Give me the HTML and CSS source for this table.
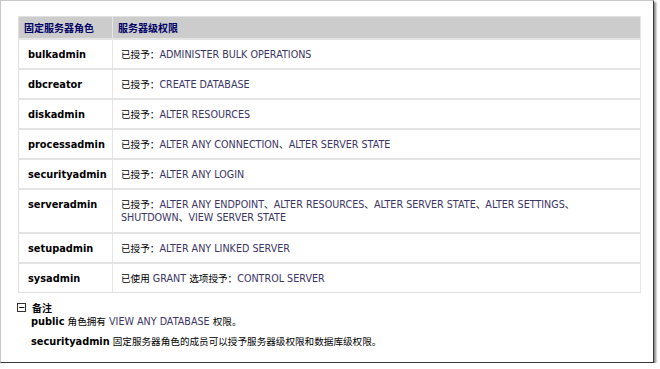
FILE: index.html
```html
<!DOCTYPE html>
<html>

<head>
  <title>固定服务器角色</title>
  <link rel="stylesheet" href="styles.css">
</head>

<body>
  <div class="frame">
    <table class="roles">
      <thead>
        <tr>
          <th class="col-role">固定服务器角色</th>
          <th>服务器级权限</th>
        </tr>
      </thead>
      <tbody>
        <tr>
          <td class="role">bulkadmin</td>
          <td>已授予：<span class="code">ADMINISTER BULK OPERATIONS</span></td>
        </tr>
        <tr>
          <td class="role">dbcreator</td>
          <td>已授予：<span class="code">CREATE DATABASE</span></td>
        </tr>
        <tr>
          <td class="role">diskadmin</td>
          <td>已授予：<span class="code">ALTER RESOURCES</span></td>
        </tr>
        <tr>
          <td class="role">processadmin</td>
          <td>已授予：<span class="code">ALTER ANY CONNECTION</span>、<span class="code">ALTER SERVER STATE</span></td>
        </tr>
        <tr>
          <td class="role">securityadmin</td>
          <td>已授予：<span class="code">ALTER ANY LOGIN</span></td>
        </tr>
        <tr class="tall">
          <td class="role">serveradmin</td>
          <td>已授予：<span class="code">ALTER ANY ENDPOINT</span>、<span class="code">ALTER RESOURCES</span>、<span class="code">ALTER SERVER STATE</span>、<span class="code">ALTER SETTINGS</span>、<br><span class="code">SHUTDOWN</span>、<span class="code">VIEW SERVER STATE</span></td>
        </tr>
        <tr>
          <td class="role">setupadmin</td>
          <td>已授予：<span class="code">ALTER ANY LINKED SERVER</span></td>
        </tr>
        <tr>
          <td class="role">sysadmin</td>
          <td>已使用 <span class="code">GRANT</span> 选项授予：<span class="code">CONTROL SERVER</span></td>
        </tr>
      </tbody>
    </table>

    <div class="notes">
      <div class="notes-title">
        <span class="toggle">−</span>
        <span>备注</span>
      </div>
      <p><b>public</b> 角色拥有 <span class="code">VIEW ANY DATABASE</span> 权限。</p>
      <p><b>securityadmin</b> 固定服务器角色的成员可以授予服务器级权限和数据库级权限。</p>
    </div>
  </div>
</body>

</html>
```

FILE: styles.css
```css
body {
  margin: 0;
  background: #ffffff;
  font-family: "DejaVu Sans", Verdana, "Noto Sans CJK SC", sans-serif;
  color: #000000;
}

/* Outer window with drop shadow */
.frame {
  width: 654px;
  height: 363px;
  border-left: 1px solid #c8c8c8;
  border-top: 1px solid #c8c8c8;
  border-right: 1px solid #3a3a3a;
  border-bottom: 1px solid #3a3a3a;
  box-shadow: 2px 2px 2px #8a8a8a;
  padding: 15px 0 0 17px;
  box-sizing: border-box;
}

/* Roles table */
.roles {
  width: 623px;
  border-collapse: collapse;
  border: 1px solid #e0e0e0;
}

.roles th {
  background-color: #cccccc;
  color: #000066;
  font-family: "Noto Sans CJK SC", sans-serif;
  font-size: 10px;
  font-weight: bold;
  text-align: left;
  height: 21px;
  padding: 0 5px;
  border-bottom: 1px solid #d8dcf0;
  border-right: 1px solid #e6e6e6;
}

.roles .col-role {
  width: 83px;
}

.roles td {
  padding: 8px 5px 7px 8px;
  font-size: 9.6px;
  border-top: 2px solid #e4e4e4;
  border-right: 1px solid #e4e4e4;
  vertical-align: top;
  line-height: 13px;
}

.roles td.role {
  font-size: 9.8px;
  font-weight: bold;
  padding-left: 9px;
}

.roles tr.tall td {
  padding-bottom: 8px;
}

.code {
  color: #3b3664;
}

/* Notes below the table */
.notes {
  margin-top: 7px;
  margin-left: -1px;
  font-size: 9.6px;
}

.notes-title {
  display: flex;
  align-items: center;
  gap: 6px;
  font-weight: bold;
  font-size: 10px;
}

.toggle {
  display: inline-flex;
  align-items: center;
  justify-content: center;
  width: 7px;
  height: 7px;
  border: 1px solid #333333;
  font-size: 8px;
  line-height: 7px;
  font-weight: bold;
}

.notes p {
  margin: 0 0 7px 14px;
  line-height: 13px;
}

.notes p b {
  font-size: 9.8px;
}
```
